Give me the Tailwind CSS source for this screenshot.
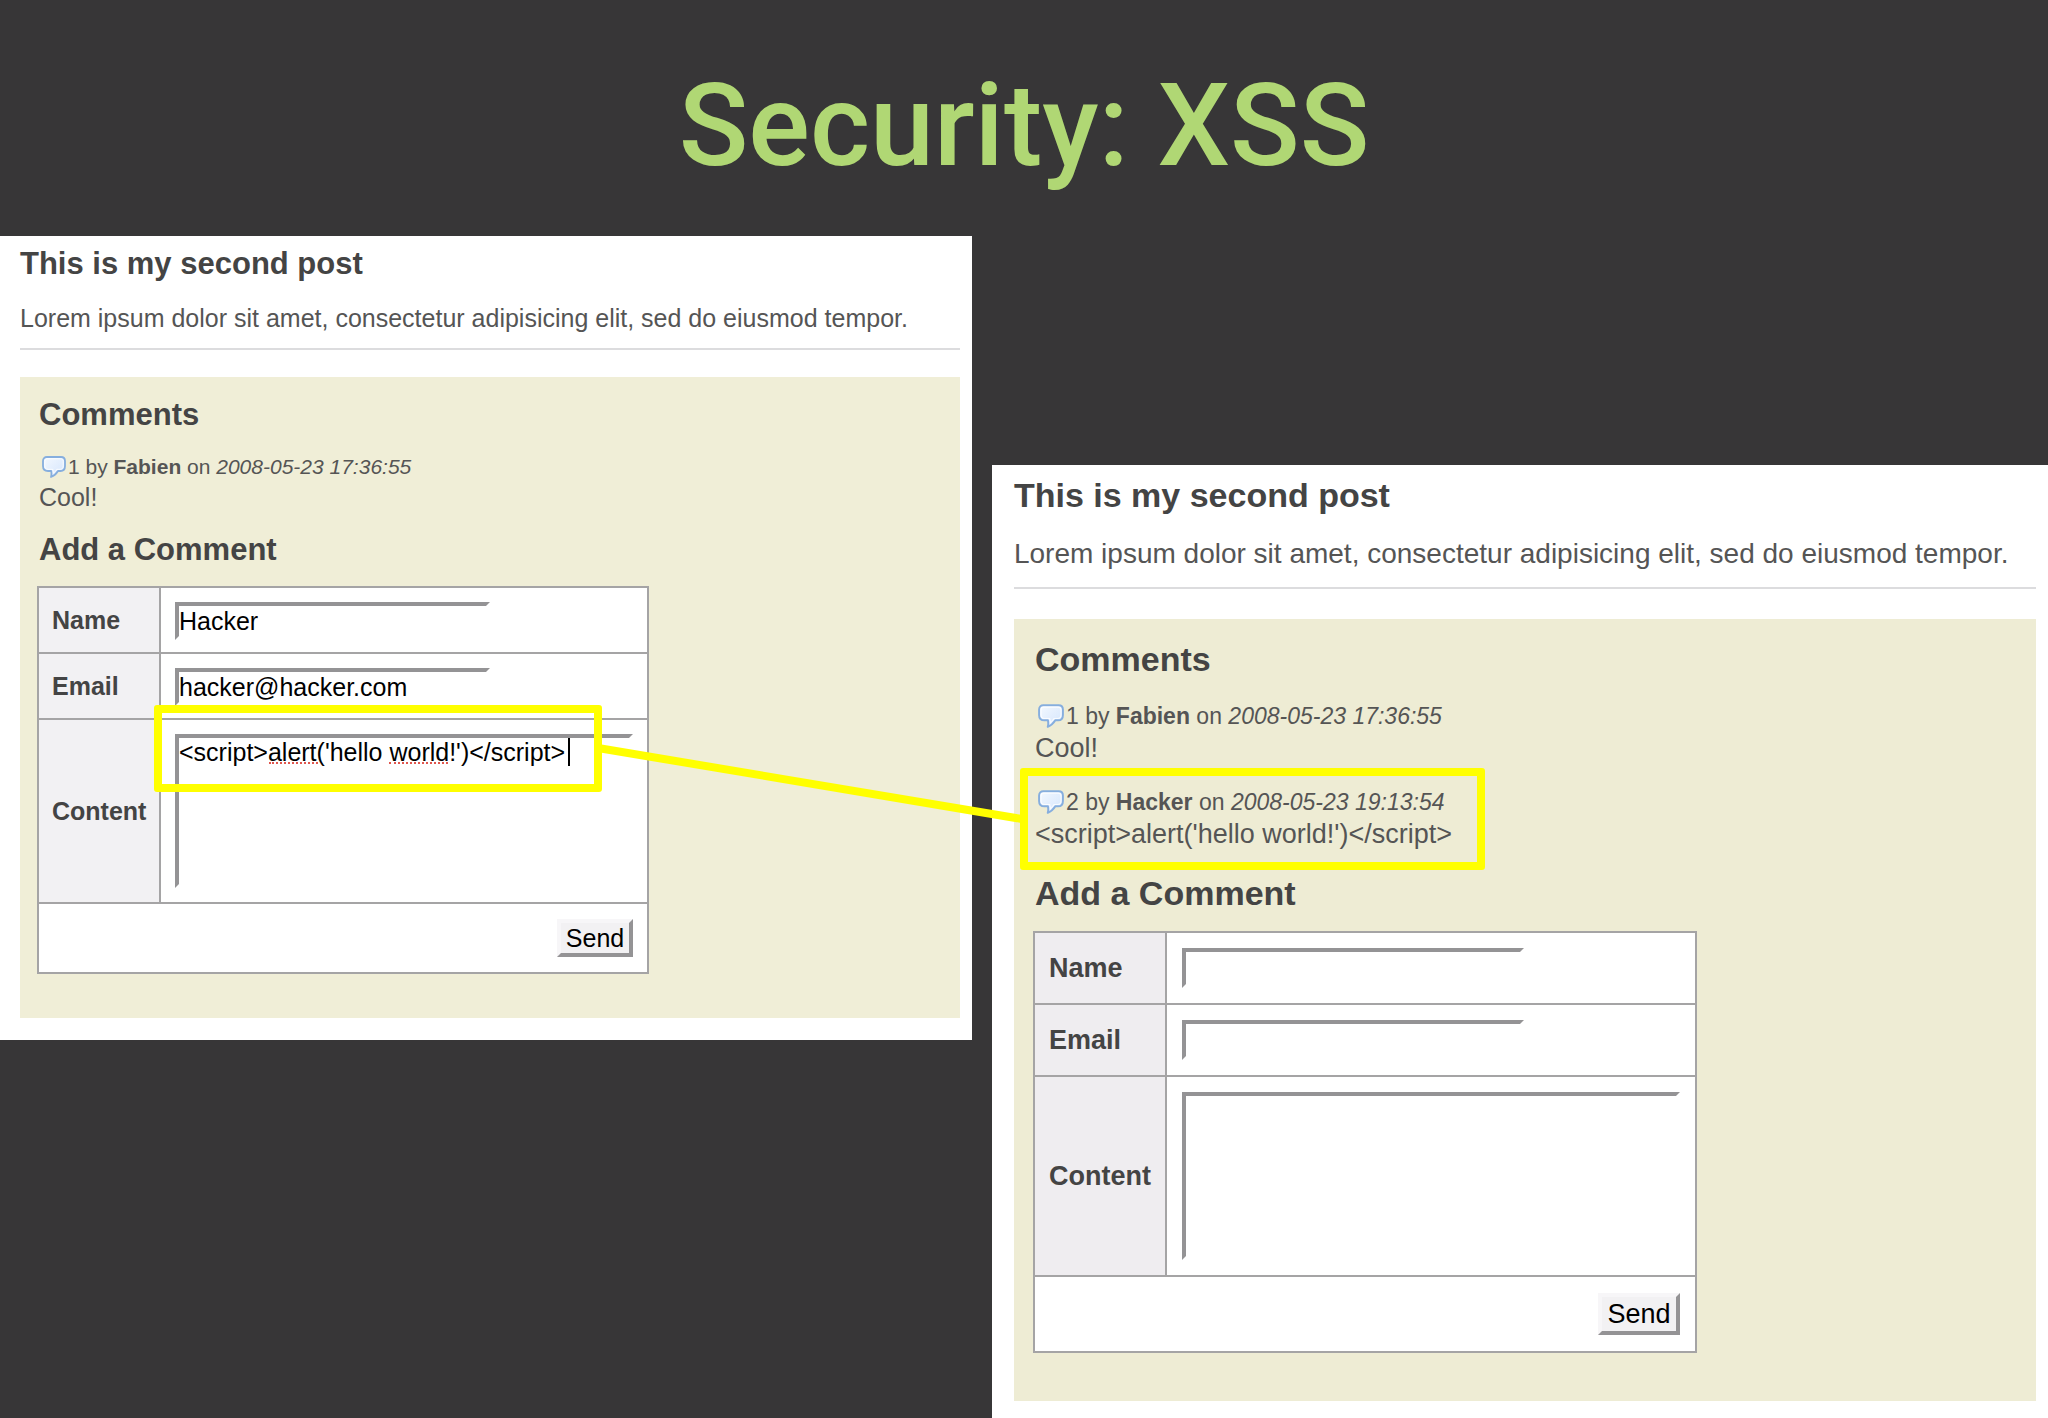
<!DOCTYPE html>
<html lang="en">
<head>
  <meta charset="UTF-8" />
  <meta name="viewport" content="width=device-width, initial-scale=1.0"/>
  <title>Security: XSS</title>
  <script src="https://cdn.jsdelivr.net/npm/@tailwindcss/browser@4"></script>
</head>
<body class="min-h-screen flex flex-col bg-[#373637] text-[#555] font-['Liberation_Sans',Arial,sans-serif]">
  <!-- Bubble icon shared by the comment lists -->
  <svg class="absolute w-0 h-0">
    <defs>
      <linearGradient id="bubbleFill" x1="0" y1="0" x2="1" y2="1">
        <stop offset="0" stop-color="#f4f9ff"/>
        <stop offset="1" stop-color="#d3e4fc"/>
      </linearGradient>
    </defs>
    <symbol id="bubble" viewBox="0 0 24 22">
      <path d="M5 1h14c2.500 0 4 1.500 4 4v5c0 3.200-1.700 5-4.500 5H16c-1.600 2.600-3.800 4.800-7 6 .5-1.700.6-3.900.2-6H6c-3.200 0-5-1.800-5-5V5c0-2.500 1.500-4 4-4z" fill="url(#bubbleFill)" stroke="#86aede" stroke-width="1.800" stroke-linejoin="round"/>
      <path d="M5.500 2.800h13c1.700 0 2.700 1 2.700 2.700v4.300c0 2.300-1 3.500-3 3.500h-3.400c-1 1.700-2 2.900-3.400 4 .1-1.300-.3-2.700-.6-4H6.200c-2.200 0-3.400-1.200-3.400-3.500V5.500c0-1.700 1-2.700 2.700-2.700z" fill="none" stroke="#ffffff" stroke-width="1" opacity=".8"/>
    </symbol>
  </svg>

  <header class="pt-[66px] pb-[50px] text-center">
    <h1 class="font-[Roboto,sans-serif] font-medium text-[115px] leading-[120px] text-[#b0d774]">Security: XSS</h1>
  </header>

  <main class="flex-1 flex items-start gap-5">
    <!-- Before: the form being filled in -->
    <article class="w-[47.46%] shrink-0 bg-white pt-2.5 pb-[22px] pl-5 pr-3 text-[25px]">
      <h2 class="text-[31px] leading-9 font-bold text-[#444]">This is my second post</h2>
      <p class="mt-5 leading-8">Lorem ipsum dolor sit amet, consectetur adipisicing elit, sed do eiusmod tempor.</p>
      <hr class="mt-3.5 border-0 h-0.5 bg-[#dcdcde]">

      <section class="mt-[27px] pt-5 pb-11 pl-[19px] bg-[#f0eed7]">
        <h3 class="text-[31px] leading-9 font-bold text-[#444]">Comments</h3>
        <div class="mt-[19px]">
          <div class="flex items-center gap-0.5 text-[21px] leading-[30px]">
            <svg class="ml-[3px] w-6 h-[22px]"><use href="#bubble"/></svg>
            <p>1 by <strong>Fabien</strong> on <em>2008-05-23 17:36:55</em></p>
          </div>
          <p class="leading-[30px]">Cool!</p>
        </div>

        <h3 class="mt-5 text-[31px] leading-9 font-bold text-[#444]">Add a Comment</h3>
        <form onsubmit="return false">
          <table class="mt-[18px] -ml-0.5 border-collapse bg-white">
            <tr>
              <th class="w-[122px] pl-[13px] pt-0.5 border-2 border-[#a5a4a5] bg-[#f2f1f3] text-left text-[#444]"><label for="name1">Name</label></th>
              <td class="px-3.5 pt-3.5 pb-3 border-2 border-[#a5a4a5]">
                <input id="name1" type="text" value="Hacker" class="block w-[315px] h-[38px] border-4 border-t-[#949395] border-l-[#949395] border-r-white border-b-white text-black">
              </td>
            </tr>
            <tr>
              <th class="pl-[13px] pt-0.5 border-2 border-[#a5a4a5] bg-[#f2f1f3] text-left text-[#444]"><label for="email1">Email</label></th>
              <td class="px-3.5 pt-3.5 pb-3 border-2 border-[#a5a4a5]">
                <input id="email1" type="text" value="hacker@hacker.com" class="block w-[315px] h-[38px] border-4 border-t-[#949395] border-l-[#949395] border-r-white border-b-white text-black">
              </td>
            </tr>
            <tr>
              <th class="pl-[13px] pt-0.5 border-2 border-[#a5a4a5] bg-[#f2f1f3] text-left text-[#444]"><label for="content1">Content</label></th>
              <td class="p-3.5 border-2 border-[#a5a4a5]">
                <div class="relative">
                  <textarea id="content1" spellcheck="false" class="block w-[458px] h-[154px] resize-none overflow-hidden border-4 border-t-[#949395] border-l-[#949395] border-r-white border-b-white leading-[29px] text-black">&lt;script&gt;alert('hello world!')&lt;/script&gt;</textarea>
                  <!-- spelling marks and caret -->
                  <span class="absolute left-[94px] top-7 w-[49px] border-b-2 border-dotted border-[#e0564e]"></span>
                  <span class="absolute left-[214px] top-7 w-[59px] border-b-2 border-dotted border-[#e0564e]"></span>
                  <span class="absolute left-[393px] top-1 w-0.5 h-7 bg-black"></span>
                  <!-- highlight, with the line to the stored comment -->
                  <div class="absolute -left-[21px] -top-[29px] w-[448px] h-[87px] border-8 border-[#ffff00] rounded-[3px] pointer-events-none">
                    <svg class="absolute left-full top-0 w-[430px] h-[120px] overflow-visible" viewBox="0 0 430 120">
                      <line x1="4" y1="35" x2="428" y2="106" stroke="#ffff00" stroke-width="8"/>
                    </svg>
                  </div>
                </div>
              </td>
            </tr>
            <tr>
              <td colspan="2" class="px-3.5 py-[15px] border-2 border-[#a5a4a5]">
                <button type="submit" class="block ml-auto w-[76px] h-[38px] bg-[#f2f1f3] border-4 border-t-[#f7f6f8] border-l-[#f7f6f8] border-r-[#949395] border-b-[#949395] leading-[30px] text-black">Send</button>
              </td>
            </tr>
          </table>
        </form>
      </section>
    </article>

    <!-- After: the comment is stored and shown escaped -->
    <article class="flex-1 mt-[229px] bg-white pt-2.5 pb-[17px] pl-[22px] pr-3 text-[27px]">
      <h2 class="text-[34px] leading-10 font-bold text-[#444]">This is my second post</h2>
      <p class="mt-[22px] text-[28px] leading-[34px] whitespace-nowrap">Lorem ipsum dolor sit amet, consectetur adipisicing elit, sed do eiusmod tempor.</p>
      <hr class="mt-4 border-0 h-0.5 bg-[#dcdcde]">

      <section class="mt-[30px] pt-5 pb-12 pl-[21px] bg-[#eeecd4]">
        <h3 class="text-[34px] leading-10 font-bold text-[#444]">Comments</h3>
        <div class="mt-[21px]">
          <div class="flex items-center gap-0.5 text-[23px] leading-8">
            <svg class="ml-[3px] w-[26px] h-6"><use href="#bubble"/></svg>
            <p>1 by <strong>Fabien</strong> on <em>2008-05-23 17:36:55</em></p>
          </div>
          <p class="leading-8">Cool!</p>
        </div>
        <div class="relative mt-[22px]">
          <div class="flex items-center gap-0.5 text-[23px] leading-8">
            <svg class="ml-[3px] w-[26px] h-6"><use href="#bubble"/></svg>
            <p>2 by <strong>Hacker</strong> on <em>2008-05-23 19:13:54</em></p>
          </div>
          <p class="leading-8">&lt;script&gt;alert('hello world!')&lt;/script&gt;</p>
          <div class="absolute -left-[15px] -top-[18px] w-[465px] h-[102px] border-8 border-[#ffff00] rounded-[3px] pointer-events-none"></div>
        </div>

        <h3 class="mt-[23px] text-[34px] leading-10 font-bold text-[#444]">Add a Comment</h3>
        <form onsubmit="return false">
          <table class="mt-[18px] -ml-0.5 border-collapse bg-white">
            <tr>
              <th class="w-[132px] pl-[14px] border-2 border-[#a5a4a5] bg-[#efedf0] text-left text-[#444]"><label for="name2">Name</label></th>
              <td class="p-[15px] border-2 border-[#a5a4a5]">
                <input id="name2" type="text" class="block w-[342px] h-10 border-4 border-t-[#949395] border-l-[#949395] border-r-white border-b-white text-black">
              </td>
            </tr>
            <tr>
              <th class="pl-[14px] border-2 border-[#a5a4a5] bg-[#efedf0] text-left text-[#444]"><label for="email2">Email</label></th>
              <td class="p-[15px] border-2 border-[#a5a4a5]">
                <input id="email2" type="text" class="block w-[342px] h-10 border-4 border-t-[#949395] border-l-[#949395] border-r-white border-b-white text-black">
              </td>
            </tr>
            <tr>
              <th class="pl-[14px] border-2 border-[#a5a4a5] bg-[#efedf0] text-left text-[#444]"><label for="content2">Content</label></th>
              <td class="p-[15px] border-2 border-[#a5a4a5]">
                <textarea id="content2" class="block w-[498px] h-[168px] resize-none border-4 border-t-[#949395] border-l-[#949395] border-r-white border-b-white text-black"></textarea>
              </td>
            </tr>
            <tr>
              <td colspan="2" class="px-[15px] py-4 border-2 border-[#a5a4a5]">
                <button type="submit" class="block ml-auto w-[82px] h-[42px] bg-[#f2f1f3] border-4 border-t-[#f7f6f8] border-l-[#f7f6f8] border-r-[#949395] border-b-[#949395] leading-[34px] text-black">Send</button>
              </td>
            </tr>
          </table>
        </form>
      </section>
    </article>
  </main>
</body>
</html>
